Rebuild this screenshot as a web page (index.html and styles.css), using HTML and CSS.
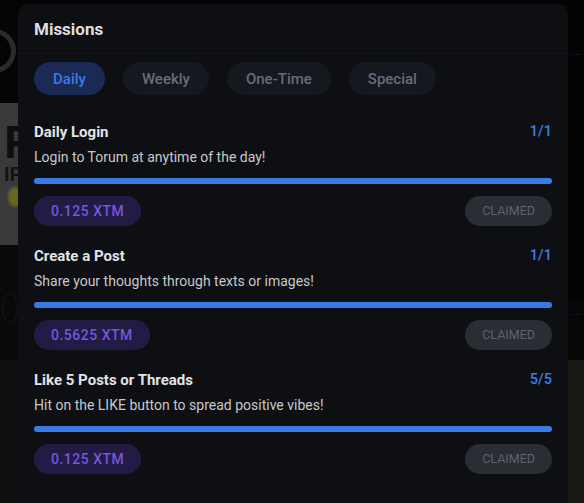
FILE: index.html
```html
<!DOCTYPE html>
<html>
<head>
<meta charset="utf-8">
<link rel="stylesheet" href="styles.css">
</head>
<body>
<div class="page">
  <div class="side side-left">
    <div class="blk blk-top"><div class="ring"></div></div>
    <div class="blk blk-img"><span class="big-f">F</span><span class="ip">IP</span><span class="blob"></span></div>
    <div class="blk blk-dark"><div class="ghost"></div></div>
    <div class="blk blk-bottom"></div>
  </div>
  <div class="side side-right">
    <div class="rblk rblk-top"><span class="dots">...</span></div>
    <div class="rblk rblk-mid"><span class="dots">...</span></div>
    <div class="rblk rblk-bottom"></div>
  </div>
</div>

<div class="modal">
  <div class="modal-head">Missions</div>
  <div class="tabs">
    <button class="tab active">Daily</button>
    <button class="tab">Weekly</button>
    <button class="tab">One-Time</button>
    <button class="tab">Special</button>
  </div>
  <div class="missions">
    <div class="mission">
      <div class="m-row"><span class="m-title">Daily Login</span><span class="m-count">1/1</span></div>
      <div class="m-desc">Login to Torum at anytime of the day!</div>
      <div class="bar"><div class="fill" style="width:100%"></div></div>
      <div class="m-foot"><span class="reward">0.125 XTM</span><span class="claimed">CLAIMED</span></div>
    </div>
    <div class="mission">
      <div class="m-row"><span class="m-title">Create a Post</span><span class="m-count">1/1</span></div>
      <div class="m-desc">Share your thoughts through texts or images!</div>
      <div class="bar"><div class="fill" style="width:100%"></div></div>
      <div class="m-foot"><span class="reward">0.5625 XTM</span><span class="claimed">CLAIMED</span></div>
    </div>
    <div class="mission">
      <div class="m-row"><span class="m-title">Like 5 Posts or Threads</span><span class="m-count">5/5</span></div>
      <div class="m-desc">Hit on the LIKE button to spread positive vibes!</div>
      <div class="bar"><div class="fill" style="width:100%"></div></div>
      <div class="m-foot"><span class="reward">0.125 XTM</span><span class="claimed">CLAIMED</span></div>
    </div>
  </div>
</div>
</body>
</html>
```

FILE: styles.css
```css
* { box-sizing: border-box; }
html, body { margin: 0; padding: 0; }
body {
  width: 584px;
  height: 503px;
  overflow: hidden;
  background: #040405;
  font-family: Roboto, "Liberation Sans", sans-serif;
  position: relative;
}
.page {
  display: flex;
  justify-content: space-between;
  height: 503px;
}
.side { display: flex; flex-direction: column; overflow: hidden; }
.side-left { width: 18px; }
.side-right { width: 16px; }
.blk-top { height: 103px; background: #050506; overflow: hidden; }
.ring {
  width: 44px; height: 44px; border-radius: 50%;
  border: 5px solid #2b2b2d;
  margin: 29px 0 0 -28px;
}
.blk-img {
  height: 142px; background: #3a3a3a; overflow: hidden;
  display: flex; flex-direction: column; padding: 18px 0 0 4px;
}
.big-f { font: 700 46px/42px "Liberation Sans", sans-serif; color: #0e0e0e; }
.ip { font: 700 20px/22px "Liberation Sans", sans-serif; color: #121212; }
.blob { width: 14px; height: 20px; border-radius: 50%; background: #6b6420; margin: 2px 0 0 4px; filter: blur(1px); }
.blk-dark { height: 115px; background: #08090a; padding-top: 48px; }
.ghost { width: 16px; height: 30px; border-radius: 50%; border: 1px solid #15181b; margin-left: 2px; }
.blk-bottom { flex: 1; background: #0f0f0f; }
.rblk-top { height: 300px; background: #030304; padding: 40px 0 0 4px; }
.rblk-mid { height: 60px; background: #060607; padding: 0 0 0 4px; }
.rblk-bottom { flex: 1; background: #1a1814; }
.dots { color: #3a3a3c; font-size: 10px; letter-spacing: 1px; line-height: 10px; }

.modal {
  position: absolute;
  left: 18px;
  top: 4px;
  width: 550px;
  height: 520px;
  background: #0d0f13;
  border-radius: 10px;
  color: #e3e3e3;
}
.modal-head {
  height: 50px;
  padding: 15px 16px 0;
  font-size: 17px;
  font-weight: 700;
  line-height: 20px;
  color: #dedfe1;
  border-bottom: 1px solid #15171c;
}
.tabs {
  display: flex;
  gap: 18px;
  padding: 8px 16px 0;
}
.tab {
  height: 33px;
  padding: 0 19px;
  border: none;
  border-radius: 17px;
  background: #16181f;
  color: #676c7b;
  font-family: Roboto, "Liberation Sans", sans-serif;
  font-size: 15px;
  font-weight: 500;
}
.tab.active { background: #1a2a54; color: #3c7ae6; }
.missions {
  padding: 27px 16px 0;
  display: flex;
  flex-direction: column;
  gap: 20px;
}
.m-row {
  display: flex;
  justify-content: space-between;
  line-height: 20px;
}
.m-title { font-size: 15px; font-weight: 700; color: #e2e3e5; }
.m-count { font-size: 14.5px; font-weight: 500; color: #3c7ce6; }
.m-desc { margin-top: 5px; font-size: 14px; line-height: 20px; color: #c7c8cb; }
.bar { margin-top: 11px; height: 6px; border-radius: 3px; background: #1d2230; }
.fill { height: 6px; border-radius: 3px; background: #3a79e6; }
.m-foot {
  margin-top: 12px;
  display: flex;
  justify-content: space-between;
  align-items: center;
}
.reward {
  height: 30px;
  line-height: 30px;
  padding: 0 17px;
  border-radius: 15px;
  background: #221b44;
  color: #7556de;
  font-size: 14px;
  font-weight: 500;
  letter-spacing: 0.5px;
}
.claimed {
  height: 30px;
  line-height: 30px;
  padding: 0 17px;
  border-radius: 15px;
  background: #2a2d34;
  color: #5f636b;
  font-size: 12.5px;
}
```
